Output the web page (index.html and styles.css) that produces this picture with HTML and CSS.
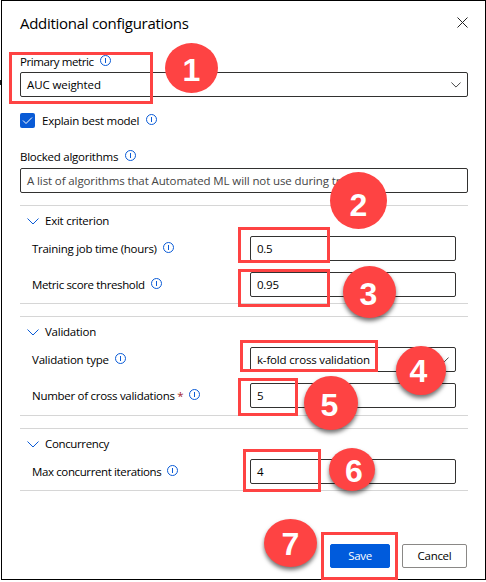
FILE: index.html
```html
<!DOCTYPE html>
<html lang="en">
<head>
<meta charset="utf-8">
<title>Additional configurations</title>
<link rel="stylesheet" href="styles.css">
</head>
<body>
<svg class="defs" aria-hidden="true">
  <symbol id="info" viewBox="0 0 11 11"><circle cx="5.5" cy="5.5" r="5"/><path d="M5.5 3v5"/></symbol>
  <symbol id="chevron" viewBox="0 0 12 7"><path d="M.5.5 6 6 11.500.5"/></symbol>
</svg>
<main class="panel">
  <header class="header">
    <h1 class="title">Additional configurations</h1>
    <svg class="close" viewBox="0 0 11 11"><path d="M.5.5l10 10M10.500.5l-10 10"/></svg>
  </header>

  <div class="label metric-label"><span class="t-metric">Primary metric</span><svg class="info"><use href="#info"/></svg></div>
  <div class="field"><span class="t-auc">AUC weighted</span><svg class="caret"><use href="#chevron"/></svg></div>

  <div class="check-row">
    <span class="checkbox"><svg viewBox="0 0 15 15"><path d="M3 7.500l3 3 6-6"/></svg></span>
    <span class="t-explain">Explain best model</span><svg class="info"><use href="#info"/></svg>
  </div>

  <div class="label blocked-label"><span class="t-blocked">Blocked algorithms</span><svg class="info"><use href="#info"/></svg></div>
  <div class="field blocked"><span class="t-list">A list of algorithms that Automated ML will not use during tr</span></div>

  <section class="group exit">
    <h2 class="group-title"><svg class="toggle"><use href="#chevron"/></svg><span class="t-exit">Exit criterion</span></h2>
    <div class="row"><div class="label"><span class="t-training">Training job time (hours)</span><svg class="info"><use href="#info"/></svg></div><div class="field">0.5</div></div>
    <div class="row"><div class="label"><span class="t-score">Metric score threshold</span><svg class="info"><use href="#info"/></svg></div><div class="field">0.95</div></div>
  </section>

  <section class="group validation">
    <h2 class="group-title"><svg class="toggle"><use href="#chevron"/></svg><span class="t-validation">Validation</span></h2>
    <div class="row"><div class="label"><span class="t-type">Validation type</span><svg class="info"><use href="#info"/></svg></div><div class="field"><span class="t-kfold">k-fold cross validation</span><svg class="caret"><use href="#chevron"/></svg></div></div>
    <div class="row"><div class="label"><span class="t-number">Number of cross validations <span class="required">*</span></span><svg class="info"><use href="#info"/></svg></div><div class="field">5</div></div>
  </section>

  <section class="group concurrency">
    <h2 class="group-title"><svg class="toggle"><use href="#chevron"/></svg><span class="t-concurrency">Concurrency</span></h2>
    <div class="row"><div class="label"><span class="t-max">Max concurrent iterations</span><svg class="info"><use href="#info"/></svg></div><div class="field">4</div></div>
  </section>

  <footer class="footer">
    <button class="button primary">Save</button>
    <button class="button">Cancel</button>
  </footer>
</main>

<div class="edge"></div>
<div class="mark m1"></div><div class="mark m2"></div><div class="mark m3"></div><div class="mark m4"></div>
<div class="mark m5"></div><div class="mark m6"></div><div class="mark m7"></div>
<div class="step s1">1</div><div class="step s2">2</div>
<div class="step raised s3">3</div><div class="step raised s4">4</div><div class="step raised s5">5</div>
<div class="step raised s6">6</div><div class="step raised s7">7</div>
</body>
</html>
```
FILE: styles.css
```css
* { box-sizing: border-box; }
body {
  margin: 0;
  width: 486px;
  height: 582px;
  overflow: hidden;
  position: relative;
  background: #fff;
  color: #000;
  font: 11.5px/16px "Open Sans", "Noto Sans", sans-serif;
  letter-spacing: -.25px;
}
.defs { position: absolute; width: 0; height: 0; }
svg { fill: none; flex: none; }
.panel {
  height: 580px;
  margin-left: 1px;
  padding: 0 18px;
  border: 1px solid #000;
  display: flex;
  flex-direction: column;
  white-space: nowrap;
}
.header { display: flex; justify-content: space-between; height: 51px; padding: 11px 0 0; }
.title { margin: 0; font-size: 15px; line-height: 22px; font-weight: 400; letter-spacing: -.28px; }
.close { width: 11px; height: 11px; margin: 5px -1px 0 0; stroke: #222; }
.label { display: flex; align-items: center; height: 18px; }
.info { width: 11px; height: 11px; margin: 0 0 3px 6px; stroke: #0a5bd6; }
.metric-label { height: 20px; }
.metric-label span { margin-top: -1px; }
.field {
  flex: none;
  display: flex;
  align-items: center;
  justify-content: space-between;
  height: 25px;
  width: 448px;
  padding: 0 6px;
  border: 1px solid #323130;
  border-radius: 2px;
}
.caret { width: 10px; height: 6px; stroke: #222; }
.check-row { display: flex; align-items: center; height: 15px; margin-top: 16px; }
.checkbox { width: 15px; height: 15px; margin-right: 7px; border-radius: 2px; background: #0a5bd6; }
.checkbox svg { display: block; width: 15px; height: 15px; stroke: #fff; }
.check-row .info { margin-bottom: 2px; margin-left: 7px; }
.blocked-label { margin-top: 20px; }
.blocked-label .info { margin-left: 7px; }
.blocked { margin-top: 2px; color: #444; }
.group { flex: none; width: 448px; border: solid #d6d6d6; border-width: 1px 0; }
.group-title { display: flex; align-items: center; height: 30px; margin: 0; padding-left: 7px; font: inherit; }
.toggle { width: 12px; height: 7px; margin-right: 6px; stroke: #0a5bd6; }
.row { display: flex; align-items: center; justify-content: space-between; height: 25px; padding: 0 12px; }
.row + .row { margin-top: 11px; }
.row .field { width: 206px; }
.exit { height: 99px; margin-top: 12px; }
.validation { height: 100px; margin-top: 12px; }
.concurrency { height: 63px; margin-top: 12px; }
.required { color: #a4262c; }
.t-metric { letter-spacing: -.4px; }
.t-auc { letter-spacing: -.1px; }
.t-list { letter-spacing: -.11px; }
.t-training { letter-spacing: -.27px; }
.t-score { letter-spacing: -.37px; }
.t-type { letter-spacing: -.2px; }
.t-kfold { letter-spacing: -.17px; }
.t-number { letter-spacing: -.28px; }
.t-concurrency { letter-spacing: -.36px; }
.t-max { letter-spacing: -.38px; }
.footer { display: flex; justify-content: flex-end; gap: 12px; margin-top: 53px; }
.button {
  width: 65px;
  height: 24px;
  padding: 0;
  border: 1px solid #8a8886;
  border-radius: 2px;
  background: #fff;
  color: #000;
  font: inherit;
  letter-spacing: -.3px;
}
.primary { width: 60px; border-color: #005bdc; background: #005bdc; color: #fff; }

/* Sliver of the page behind the panel */
.edge { position: absolute; left: 0; top: 80px; width: 1px; height: 5px; background: #222; }

/* Callouts laid over the form */
.mark { position: absolute; border: 3px solid #fe4343; }
.m1 { left: 9px; top: 52px; width: 144px; height: 52px; }
.m2 { left: 238px; top: 227px; width: 92px; height: 36px; }
.m3 { left: 238px; top: 269px; width: 92px; height: 38px; }
.m4 { left: 240px; top: 340px; width: 138px; height: 32px; }
.m5 { left: 238px; top: 378px; width: 60px; height: 38px; }
.m6 { left: 243px; top: 449px; width: 78px; height: 43px; }
.m7 { left: 321px; top: 532px; width: 77px; height: 48px; }
.step {
  position: absolute;
  display: flex;
  align-items: center;
  justify-content: center;
  border-radius: 50%;
  background: #fe4343;
  color: #fff;
  font: bold 32px/32px "Liberation Sans", Arial, sans-serif;
  letter-spacing: 0;
}
.raised { box-shadow: 0 3px 4px rgba(0, 0, 0, .55); }
.s1 { left: 165px; top: 43px; width: 53px; height: 50px; padding-top: 3px; }
.s2 { left: 330px; top: 172px; width: 57px; height: 57px; padding-top: 8px; }
.s3 { left: 343px; top: 266px; width: 53px; height: 52px; padding-top: 4px; padding-right: 2px; }
.s4 { left: 396px; top: 346px; width: 50px; height: 49px; padding-right: 5px; }
.s5 { left: 304px; top: 376px; width: 54px; height: 54px; padding-right: 3px; padding-top: 3px; }
.s6 { left: 329px; top: 448px; width: 46px; height: 43px; padding-left: 4px; padding-top: 3px; }
.s7 { left: 264px; top: 519px; width: 53px; height: 48px; padding-top: 1px; }
```
